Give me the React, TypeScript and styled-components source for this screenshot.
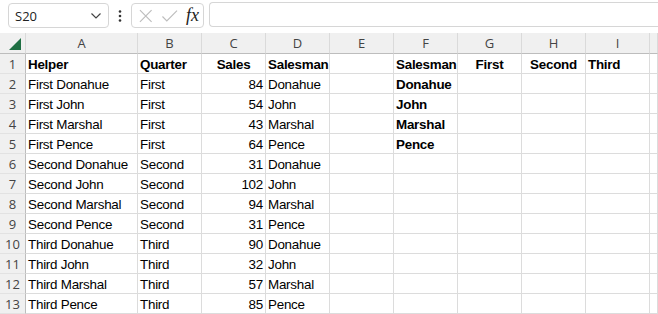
import styled, { createGlobalStyle } from 'styled-components';

const GlobalStyle = createGlobalStyle`
  html, body { margin: 0; padding: 0; background: #fff; overflow: hidden; }
  body { width: 658px; height: 314px; }
`;

const Page = styled.div`
  width: 658px;
  height: 314px;
  overflow: hidden;
  background: #fff;
  font-family: "Liberation Sans", Arial, sans-serif;
`;

const FormulaBar = styled.div`
  height: 33px;
  display: flex;
  align-items: flex-start;
  padding: 3px 0 0 8px;
  box-sizing: border-box;
`;

const NameBox = styled.div`
  width: 101px;
  height: 25px;
  box-sizing: border-box;
  border: 1px solid #d6d6d6;
  border-radius: 4px;
  display: flex;
  align-items: center;
  justify-content: space-between;
  padding: 0 6px;
  font-family: "Open Sans", "Noto Sans", sans-serif;
  font-size: 13px;
  color: #222;
`;

const Dots = styled.div`
  width: 22px;
  height: 25px;
  display: flex;
  align-items: center;
  justify-content: center;
`;

const ButtonBox = styled.div`
  width: 73px;
  height: 25px;
  box-sizing: border-box;
  border: 1px solid #d6d6d6;
  border-radius: 4px;
  display: flex;
  align-items: center;
  padding: 0 4px 0 6px;
  gap: 7px;
`;

const Fx = styled.span`
  font-family: "Liberation Serif", "Times New Roman", serif;
  font-style: italic;
  font-size: 18px;
  color: #222;
  margin-left: 1px;
`;

const FormulaInput = styled.div`
  flex: 1;
  height: 25px;
  margin-left: 5px;
  margin-top: -1px;
  box-sizing: border-box;
  border: 1px solid #d6d6d6;
  border-right: none;
  border-radius: 4px 0 0 4px;
`;

const Grid = styled.div`
  display: grid;
  grid-template-columns: 26px 112px repeat(8, 64px) 1fr;
  grid-template-rows: 21px;
  grid-auto-rows: 20px;
`;

const ColHead = styled.div`
  background: #f0f0f0;
  box-sizing: border-box;
  border-bottom: 1px solid #bdbdbd;
  border-right: 1px solid #dadada;
  display: flex;
  align-items: center;
  justify-content: center;
  font-family: "Open Sans", "Noto Sans", sans-serif;
  font-size: 13px;
  color: #444;
  position: relative;
`;

const Corner = styled.div`
  position: absolute;
  right: 4px;
  bottom: 3px;
  width: 0;
  height: 0;
  border-left: 12px solid transparent;
  border-bottom: 12px solid #1f6f43;
`;

const RowHead = styled.div`
  background: #f0f0f0;
  box-sizing: border-box;
  border-bottom: 1px solid #e2e2e2;
  border-right: 1px solid #bdbdbd;
  display: flex;
  align-items: center;
  justify-content: center;
  padding-top: 1px;
  font-family: "Open Sans", "Noto Sans", sans-serif;
  font-size: 13px;
  color: #444;
`;

const Cell = styled.div<{ $bold?: boolean; $align?: 'left' | 'right' | 'center' }>`
  box-sizing: border-box;
  border-bottom: 1px solid #dcdcdc;
  border-right: 1px solid #dcdcdc;
  padding: 0 2px 0;
  display: flex;
  align-items: flex-end;
  justify-content: ${p =>
    p.$align === 'right' ? 'flex-end' : p.$align === 'center' ? 'center' : 'flex-start'};
  font-size: 13.4px;
  letter-spacing: -0.25px;
  line-height: 17px;
  font-weight: ${p => (p.$bold ? 700 : 400)};
  color: #000;
  white-space: nowrap;
`;

type CellData = { text?: string; bold?: boolean; align?: 'left' | 'right' | 'center' };

const columns = ['', 'A', 'B', 'C', 'D', 'E', 'F', 'G', 'H', 'I', ''];

const names = ['Donahue', 'John', 'Marshal', 'Pence'];
const quarters = ['First', 'Second', 'Third'];
const sales = [84, 54, 43, 64, 31, 102, 94, 31, 90, 32, 57, 85];

const buildRows = (): CellData[][] => {
  const rows: CellData[][] = [];
  rows.push([
    { text: 'Helper', bold: true },
    { text: 'Quarter', bold: true },
    { text: 'Sales', bold: true, align: 'center' },
    { text: 'Salesman', bold: true },
    {},
    { text: 'Salesman', bold: true },
    { text: 'First', bold: true, align: 'center' },
    { text: 'Second', bold: true, align: 'center' },
    { text: 'Third', bold: true },
    {},
  ]);
  let i = 0;
  quarters.forEach(q => {
    names.forEach(n => {
      const right: CellData = i < 4 ? { text: names[i], bold: true } : {};
      rows.push([
        { text: `${q} ${n}` },
        { text: q },
        { text: String(sales[i]), align: 'right' },
        { text: n },
        {},
        right,
        {},
        {},
        {},
        {},
      ]);
      i++;
    });
  });
  return rows;
};

const ChevronIcon = () => (
  <svg width="12" height="8" viewBox="0 0 12 8">
    <path d="M1.5 1.5 L6 6 L10.5 1.5" fill="none" stroke="#444" strokeWidth="1.2" />
  </svg>
);

const DotsIcon = () => (
  <svg width="4" height="14" viewBox="0 0 4 14">
    <circle cx="2" cy="2.5" r="1.3" fill="#333" />
    <circle cx="2" cy="7" r="1.3" fill="#333" />
    <circle cx="2" cy="11.5" r="1.3" fill="#333" />
  </svg>
);

const CrossIcon = () => (
  <svg width="16" height="16" viewBox="0 0 16 16">
    <path d="M2 2 L14 14 M14 2 L2 14" stroke="#bdbdbd" strokeWidth="1.2" fill="none" />
  </svg>
);

const CheckIcon = () => (
  <svg width="18" height="16" viewBox="0 0 18 16">
    <path d="M1.5 8.5 L6 13 L16.5 2.5" stroke="#bdbdbd" strokeWidth="1.2" fill="none" />
  </svg>
);

const App = () => {
  const rows = buildRows();
  return (
    <Page>
      <GlobalStyle />
      <FormulaBar>
        <NameBox>
          <span>S20</span>
          <ChevronIcon />
        </NameBox>
        <Dots>
          <DotsIcon />
        </Dots>
        <ButtonBox>
          <CrossIcon />
          <CheckIcon />
          <Fx>fx</Fx>
        </ButtonBox>
        <FormulaInput />
      </FormulaBar>
      <Grid>
        {columns.map((c, idx) => (
          <ColHead key={`h${idx}`}>
            {idx === 0 && <Corner />}
            {c}
          </ColHead>
        ))}
        {rows.map((row, r) => [
          <RowHead key={`r${r}`}>{r + 1}</RowHead>,
          ...row.map((cell, cIdx) => (
            <Cell key={`c${r}-${cIdx}`} $bold={cell.bold} $align={cell.align}>
              {cell.text}
            </Cell>
          )),
        ])}
      </Grid>
    </Page>
  );
};

export default App;
